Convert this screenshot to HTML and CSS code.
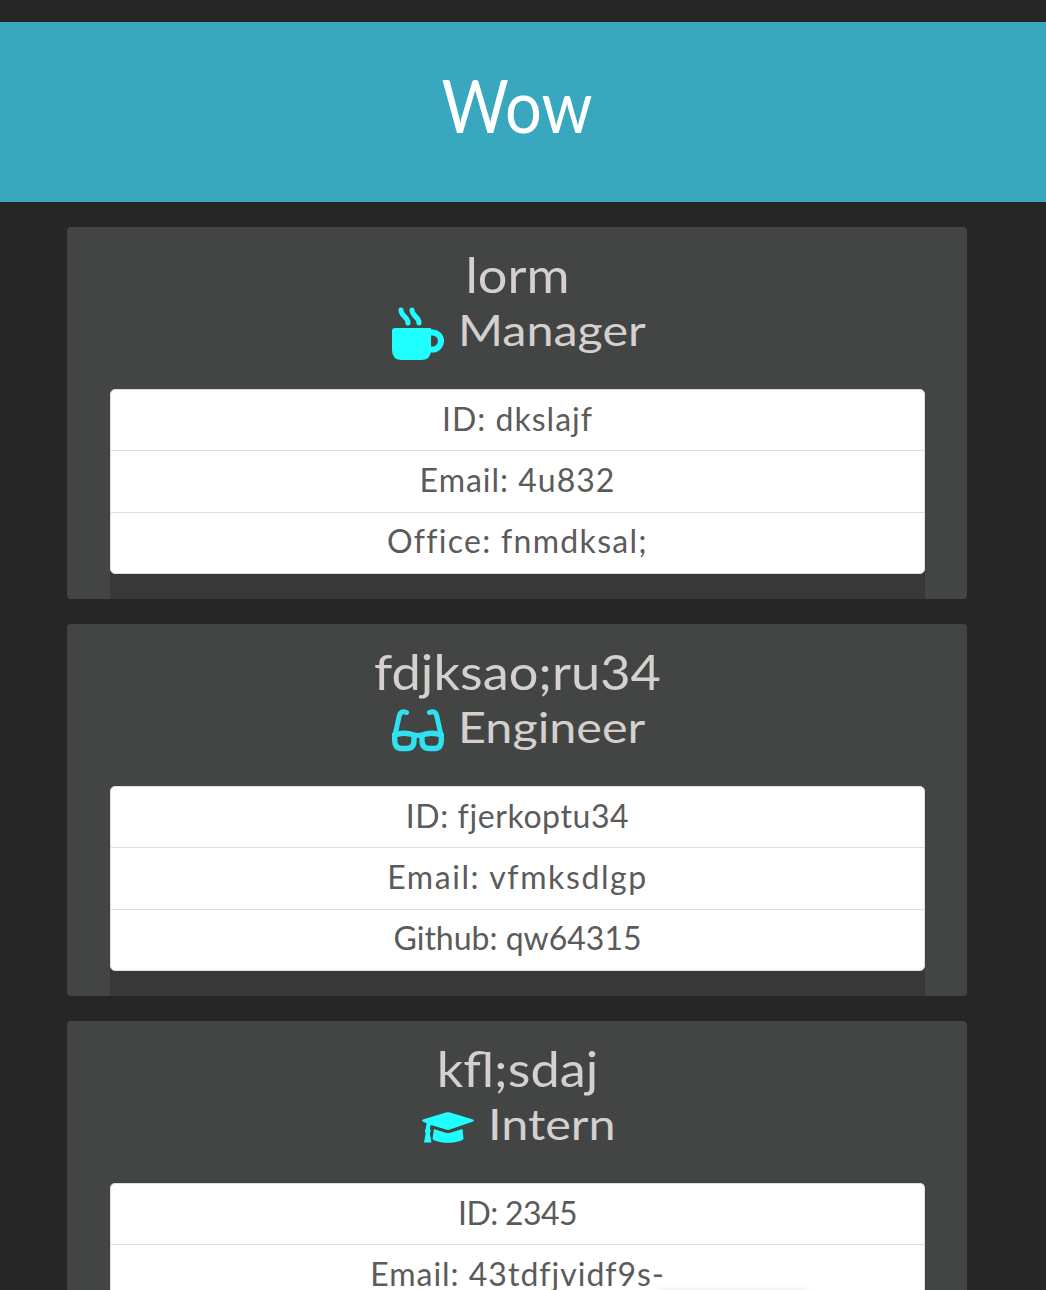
FILE: index.html
```html
<!DOCTYPE html>
<html lang="en">
<head>
<meta charset="utf-8">
<title>Wow</title>
<link rel="stylesheet" href="styles.css">
</head>
<body>
<header class="banner"><h1>Wow</h1></header>
<main class="team">
  <section class="card">
    <h2 class="name">lorm</h2>
    <h3 class="role"><svg class="icon" viewBox="0 0 52 60"><g fill="none" stroke="currentColor" stroke-linecap="round"><path stroke-width="5" d="M9 6c0 7 7 6 7 13M20 6c0 7 7 6 7 13"/><path stroke-width="6" d="M37 28.500h3.500a8.500 8.500 0 0 1 0 17H37"/></g><path fill="currentColor" d="M3 24h36v22q0 10-10 10H10Q0 56 0 46V27q0-3 3-3z"/></svg><span class="r1">Manager</span></h3>
    <ul class="details"><li class="a1">ID: dkslajf</li><li class="a2">Email: 4u832</li><li class="a3">Office: fnmdksal;</li></ul>
  </section>
  <section class="card">
    <h2 class="name">fdjksao;ru34</h2>
    <h3 class="role"><svg class="icon glasses" viewBox="0 -1 52 60"><g fill="none" stroke="currentColor" stroke-width="5" stroke-linecap="round"><path d="M2.600 35L7.200 14q1.500-6 7.300-3.500M49.400 35L44.800 14q-1.500-6-7.300-3.500M22 34q4-1.600 8 0"/><path stroke-width="5.400" d="M2.700 33q9.500-3.500 19.300 0v5.500q0 8-7.500 8H10q-7.300 0-7.300-8zM30 33q10-3.500 19.300 0v5.500q0 8-7.300 8H37.500q-7.500 0-7.500-8z"/></g></svg><span class="r2">Engineer</span></h3>
    <ul class="details"><li class="b1">ID: fjerkoptu34</li><li class="b2">Email: vfmksdlgp</li><li class="b3">Github: qw64315</li></ul>
  </section>
  <section class="card last">
    <h2 class="name">kfl;sdaj</h2>
    <h3 class="role"><svg class="icon" viewBox="0 0 52 60"><g fill="currentColor"><path d="M24 14.600q2-.6 4 0L51 21.500q2 1 0 2L28 31.600q-2 .6-4 0L9 27q-1 1-1 4 1.500 2-.2 4L9.500 44.500H2L3.700 35q-1.500-2 0-4 0-3 1.200-5.500L.8 23.500q-1.600-1 0-2z"/><path d="M12 31l11.500 3.700q2.500.8 5 0L40.500 31 41.500 41c-6 5-25 5-31 0z"/></g></svg><span class="r3">Intern</span></h3>
    <ul class="details"><li class="c1">ID: 2345</li><li class="c2">Email: 43tdfjvidf9s-</li></ul>
  </section>
</main>
<div class="edge-shadow"></div>
</body>
</html>
```
FILE: styles.css
```css
* { box-sizing: border-box; }
html { overflow: hidden; }
body { position: relative; margin: 0; padding-top: 22px; height: 1290px; overflow: hidden; background: #262626; font-family: Lato, "Open Sans", sans-serif; font-weight: 400; }
h1, h2, h3, ul { margin: 0; padding: 0; font-weight: 400; }
.banner { height: 180px; background: #39a8be; color: #fff; text-align: center; padding-right: 12px; }
.banner h1 { font-size: 73px; line-height: 167px; transform: scaleX(.89); }
.team { width: 900px; margin: 25px 0 0 67px; display: flex; flex-direction: column; gap: 25px; }
.card { height: 372px; flex: none; padding: 22px 42px 0 43px; border-radius: 4px; background: linear-gradient(#383838, #383838) 43px 100% / 815px 30px no-repeat #434544; text-align: center; color: #d5cfce; }
.name { font-size: 48px; line-height: 52px; height: 55px; transform: scaleX(1.09); }
.role { display: flex; justify-content: center; gap: 14px; height: 60px; padding-left: 3px; font-size: 42px; line-height: 52px; }
.role span { transform: scaleX(1.155); transform-origin: 0 50%; }
.icon { width: 52px; height: 60px; color: #1fffff; }
.glasses { color: #30e2f0; }
.details { list-style: none; margin-top: 25px; border: 1px solid #dcdddd; border-radius: 5px; background: #fff; color: #5b5b5b; font-size: 32px; overflow: hidden; }
.details li { height: 61px; line-height: 56px; }
.details li:first-child { height: 60px; line-height: 58px; }
.details li:nth-child(2) { height: 62px; line-height: 58px; }
.details li + li { border-top: 1px solid #dcdddd; }

/* The last card runs to the bottom of the window */
.last { height: 269px; border-radius: 4px 4px 0 0; background: #434544; }
.last .details { height: 107px; border-bottom: 0; border-radius: 5px 5px 0 0; }
.last .details li:nth-child(2) { height: 46px; }
.edge-shadow { position: absolute; left: 660px; top: 1291px; width: 145px; height: 10px; box-shadow: 0 0 8px rgba(0, 0, 0, .12); }

/* Room for the widened role names */
.r1, .r2 { margin-right: 25px; }
.r3 { margin-right: 17px; }

/* Tracking */
.a1, .a2, .c2 { letter-spacing: 1px; }
.a3 { letter-spacing: 1.3px; }
.b1 { letter-spacing: .6px; }
.b2 { letter-spacing: 1.6px; }
.c1 { letter-spacing: -.6px; }
```
